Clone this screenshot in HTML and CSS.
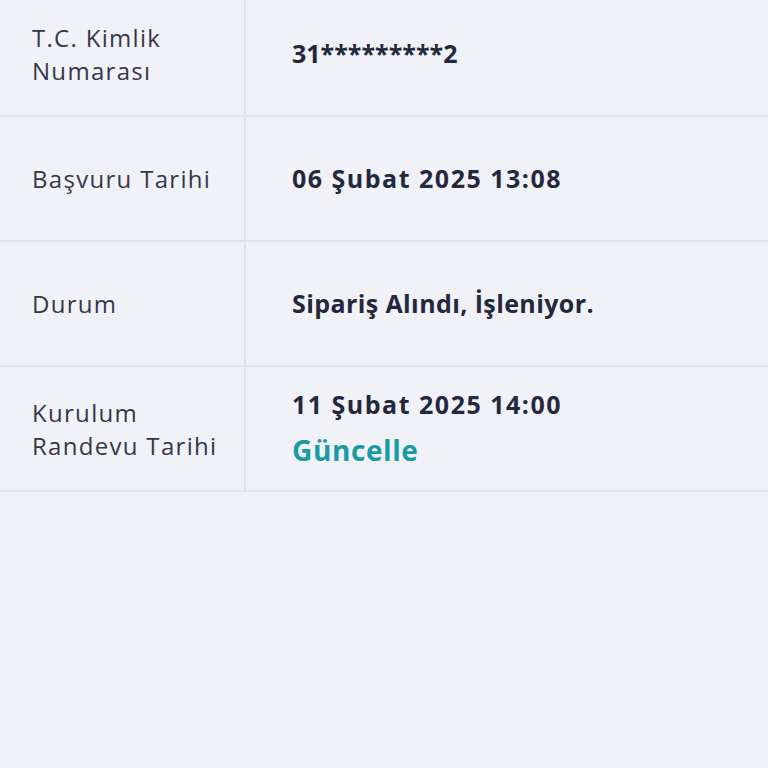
FILE: index.html
```html
<!DOCTYPE html>
<html lang="tr">
<head>
<meta charset="utf-8">
<link rel="stylesheet" href="styles.css">
</head>
<body>
<div class="table">
  <div class="row first">
    <div class="label">T.C. Kimlik<br>Numarası</div>
    <div class="value"><span class="strong strong--masked">31*********2</span></div>
  </div>
  <div class="row">
    <div class="label">Başvuru Tarihi</div>
    <div class="value"><span class="strong">06 Şubat 2025 13:08</span></div>
  </div>
  <div class="row">
    <div class="label">Durum</div>
    <div class="value"><span class="strong strong--text">Sipariş Alındı, İşleniyor.</span></div>
  </div>
  <div class="row">
    <div class="label">Kurulum<br>Randevu Tarihi</div>
    <div class="value"><span class="strong">11 Şubat 2025 14:00</span><a class="link">Güncelle</a></div>
  </div>
</div>
</body>
</html>
```
FILE: styles.css
```css
html, body {
  margin: 0;
  padding: 0;
  background: #f0f2f7;
  width: 768px;
  height: 768px;
  overflow: hidden;
}
body {
  font-family: "Open Sans", "Noto Sans", sans-serif;
  color: #2e3147;
}
.table {
  margin-top: -8px;
}
.row {
  display: grid;
  grid-template-columns: 246px 1fr;
  height: 123px;
  border-bottom: 2px solid #e1e3e9;
}
.label {
  border-right: 2px solid #e1e3e9;
  padding-left: 32px;
  display: flex;
  align-items: center;
  font-size: 24px;
  line-height: 33px;
  letter-spacing: 1.3px;
  color: #34374b;
}
.value {
  padding-left: 46px;
  display: flex;
  flex-direction: column;
  justify-content: center;
}
.strong {
  font-weight: 700;
  font-size: 25px;
  line-height: 33px;
  letter-spacing: 1.5px;
  color: #23283d;
}
.strong--masked {
  letter-spacing: 0;
}
.strong--text {
  letter-spacing: 0.4px;
}
.link {
  font-weight: 700;
  font-size: 28px;
  line-height: 40px;
  letter-spacing: 0.6px;
  margin-top: 9px;
  color: #1a9aa4;
}
```
